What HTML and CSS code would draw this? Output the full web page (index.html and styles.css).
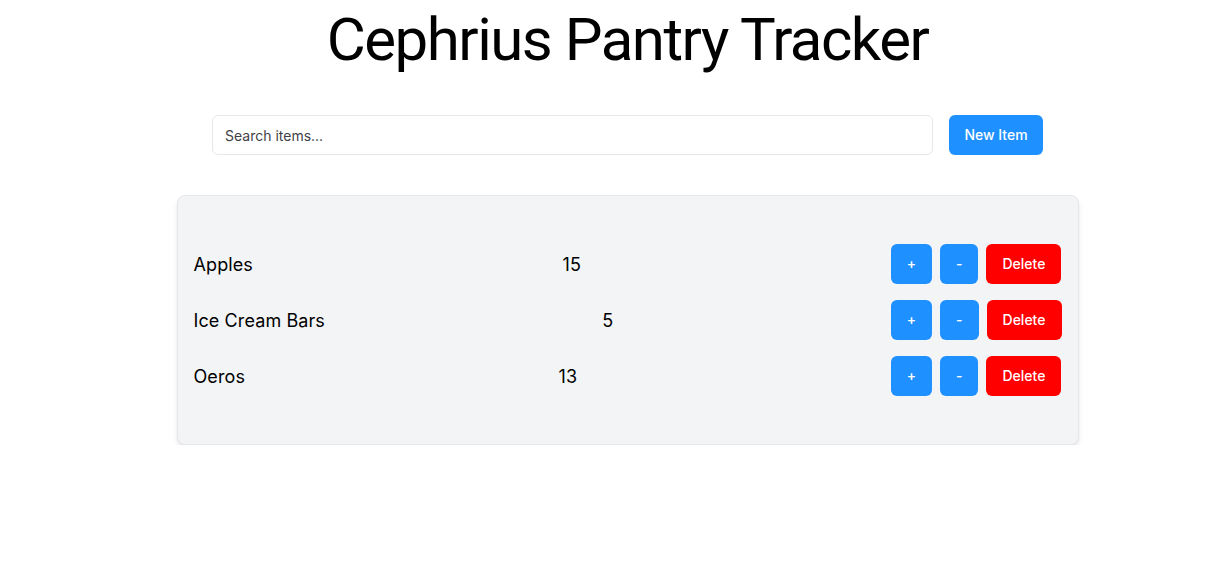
FILE: index.html
```html
<!DOCTYPE html>
<html lang="en">
<head>
<meta charset="utf-8">
<title>Cephrius Pantry Tracker</title>
<link rel="stylesheet" href="styles.css">
</head>
<body>
<main class="page">
  <h1 class="title">Cephrius Pantry Tracker</h1>
  <div class="toolbar">
    <input class="search" type="text" placeholder="Search items...">
    <button class="btn btn-blue btn-new">New Item</button>
  </div>
  <section class="card">
    <div class="row">
      <span class="name">Apples</span>
      <span class="qty">15</span>
      <div class="actions">
        <button class="btn btn-blue">+</button>
        <button class="btn btn-blue">-</button>
        <button class="btn btn-red">Delete</button>
      </div>
    </div>
    <div class="row">
      <span class="name">Ice Cream Bars</span>
      <span class="qty">5</span>
      <div class="actions">
        <button class="btn btn-blue">+</button>
        <button class="btn btn-blue">-</button>
        <button class="btn btn-red">Delete</button>
      </div>
    </div>
    <div class="row">
      <span class="name">Oeros</span>
      <span class="qty">13</span>
      <div class="actions">
        <button class="btn btn-blue">+</button>
        <button class="btn btn-blue">-</button>
        <button class="btn btn-red">Delete</button>
      </div>
    </div>
  </section>
</main>
</body>
</html>
```

FILE: styles.css
```css
* { box-sizing: border-box; }
html, body { margin: 0; padding: 0; background: #fff; }
body {
  font-family: Inter, "Liberation Sans", sans-serif;
  color: #000;
}
.page {
  padding: 0 0 0 30px;
  display: flex;
  flex-direction: column;
  align-items: center;
}
.title {
  margin: 4px 0 0 0;
  font-family: Roboto, "Liberation Sans", sans-serif;
  font-size: 60px;
  font-weight: 400;
  line-height: 72px;
  letter-spacing: -1.5px;
}
.toolbar {
  margin-top: 39px;
  display: flex;
  gap: 16px;
  width: 831px;
}
.search {
  flex: 1;
  height: 40px;
  border: 1px solid #e5e7eb;
  border-radius: 6px;
  padding: 0 12px;
  font-family: inherit;
  font-size: 14px;
  color: #111;
  outline: none;
}
.search::placeholder { color: #3f3f46; }
.btn {
  height: 40px;
  border: none;
  border-radius: 6px;
  padding: 0 16px;
  font-family: inherit;
  font-size: 14px;
  font-weight: 500;
  line-height: 40px;
  color: #fff;
  cursor: pointer;
}
.btn-blue { background: #1e90ff; }
.btn-red { background: #ff0000; }
.btn-new { width: 94px; padding: 0; }
.card {
  margin-top: 40px;
  width: 902px;
  background: #f3f4f6;
  border: 1px solid #e5e7eb;
  border-radius: 8px;
  box-shadow: 0 4px 6px -1px rgba(0,0,0,0.1), 0 2px 4px -2px rgba(0,0,0,0.1);
  padding: 48px 16px 48px 16px;
  display: flex;
  flex-direction: column;
  gap: 16px;
}
.row {
  display: flex;
  justify-content: space-between;
  align-items: center;
  height: 40px;
  font-size: 18px;
  letter-spacing: 0.1px;
}
.actions {
  display: flex;
  gap: 8px;
  letter-spacing: 0;
}
.actions .btn-red { width: 75px; padding: 0; }
```
